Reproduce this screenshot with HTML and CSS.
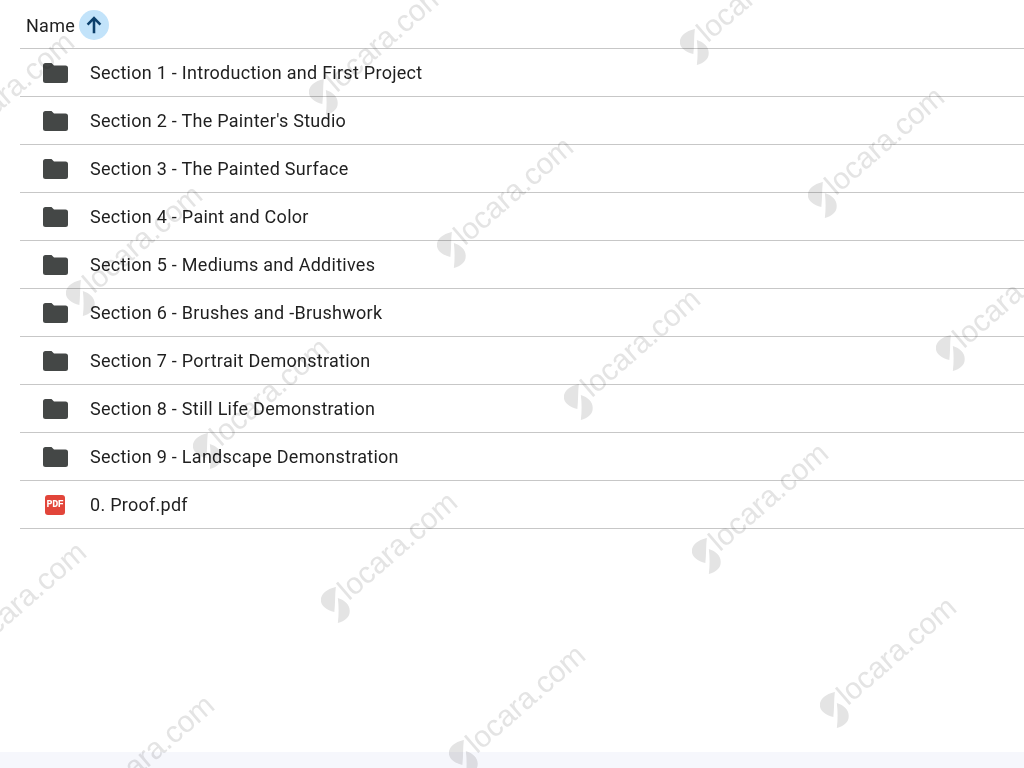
FILE: index.html
```html
<!DOCTYPE html>
<html lang="en">
<head>
  <meta charset="UTF-8" />
  <title>Drive folder</title>
  <link rel="stylesheet" href="styles.css">
</head>
<body>
  <svg class="sprites" width="0" height="0">
    <symbol id="folder" viewBox="0 0 25 20"><path d="M2.500 0h6l2.500 2.500h11.500A2.500 2.500 0 0 1 25 5v12.500a2.500 2.500 0 0 1-2.500 2.500h-20A2.500 2.500 0 0 1 0 17.500v-15A2.500 2.500 0 0 1 2.500 0z"/></symbol>
    <symbol id="logo" viewBox="0 0 29 36"><path d="M15 0C6 2 0 7 0 13c0 6 6 10 13.500 12C14.500 17 14 8 15 0zM17 11c7 2 12 7 12 13 0 6-5 10-12 12 1-8 1-17 0-25z"/></symbol>
  </svg>

  <div class="file-list">
    <div class="list-head">
      <span>Name</span>
      <span class="sort-btn">
        <svg viewBox="0 0 24 24" width="22" height="22"><path d="M12 21V5M5 11.500L12 4.500l7 7" fill="none" stroke="#0b3f6b" stroke-width="2.800"/></svg>
      </span>
    </div>
    <div class="row"><svg class="folder"><use href="#folder"/></svg><span>Section 1 - Introduction and First Project</span></div>
    <div class="row"><svg class="folder"><use href="#folder"/></svg><span>Section 2 - The Painter's Studio</span></div>
    <div class="row"><svg class="folder"><use href="#folder"/></svg><span>Section 3 - The Painted Surface</span></div>
    <div class="row"><svg class="folder"><use href="#folder"/></svg><span>Section 4 - Paint and Color</span></div>
    <div class="row"><svg class="folder"><use href="#folder"/></svg><span>Section 5 - Mediums and Additives</span></div>
    <div class="row"><svg class="folder"><use href="#folder"/></svg><span>Section 6 - Brushes and -Brushwork</span></div>
    <div class="row"><svg class="folder"><use href="#folder"/></svg><span>Section 7 - Portrait Demonstration</span></div>
    <div class="row"><svg class="folder"><use href="#folder"/></svg><span>Section 8 - Still Life Demonstration</span></div>
    <div class="row"><svg class="folder"><use href="#folder"/></svg><span>Section 9 - Landscape Demonstration</span></div>
    <div class="row"><span class="pdf-icon">PDF</span><span>0. Proof.pdf</span></div>
  </div>
  <div class="bottom-band"></div>

  <div class="wm wm1"><svg class="wm-logo"><use href="#logo"/></svg><span class="wm-text">locara.com</span></div>
  <div class="wm wm2"><svg class="wm-logo"><use href="#logo"/></svg><span class="wm-text">locara.com</span></div>
  <div class="wm wm3"><svg class="wm-logo"><use href="#logo"/></svg><span class="wm-text">locara.com</span></div>
  <div class="wm wm4"><svg class="wm-logo"><use href="#logo"/></svg><span class="wm-text">locara.com</span></div>
  <div class="wm wm5"><svg class="wm-logo"><use href="#logo"/></svg><span class="wm-text">locara.com</span></div>
  <div class="wm wm6"><svg class="wm-logo"><use href="#logo"/></svg><span class="wm-text">locara.com</span></div>
  <div class="wm wm7"><svg class="wm-logo"><use href="#logo"/></svg><span class="wm-text">locara.com</span></div>
  <div class="wm wm8"><svg class="wm-logo"><use href="#logo"/></svg><span class="wm-text">locara.com</span></div>
  <div class="wm wm9"><svg class="wm-logo"><use href="#logo"/></svg><span class="wm-text">locara.com</span></div>
  <div class="wm wm10"><svg class="wm-logo"><use href="#logo"/></svg><span class="wm-text">locara.com</span></div>
  <div class="wm wm11"><svg class="wm-logo"><use href="#logo"/></svg><span class="wm-text">locara.com</span></div>
  <div class="wm wm12"><svg class="wm-logo"><use href="#logo"/></svg><span class="wm-text">locara.com</span></div>
  <div class="wm wm13"><svg class="wm-logo"><use href="#logo"/></svg><span class="wm-text">locara.com</span></div>
  <div class="wm wm14"><svg class="wm-logo"><use href="#logo"/></svg><span class="wm-text">locara.com</span></div>
  <div class="wm wm15"><svg class="wm-logo"><use href="#logo"/></svg><span class="wm-text">locara.com</span></div>
  <div class="wm wm16"><svg class="wm-logo"><use href="#logo"/></svg><span class="wm-text">locara.com</span></div>
</body>
</html>
```

FILE: styles.css
```css
html, body {
  margin: 0;
  height: 768px;
  overflow: hidden;
}
body {
  position: relative;
  display: flex;
  flex-direction: column;
  background-color: #fff;
  font-family: Roboto, "Noto Sans", sans-serif;
  font-size: 18px;
  letter-spacing: 0.27px;
  color: #1f1f1f;
}
.sprites {
  position: absolute;
}
.file-list {
  flex: 1;
  padding-left: 20px;
}
.list-head {
  display: flex;
  align-items: center;
  gap: 4px;
  height: 49px;
  padding: 2px 0 0 6px;
  border-bottom: 1px solid #c7c7c7;
  box-sizing: border-box;
}
.sort-btn {
  display: flex;
  align-items: center;
  justify-content: center;
  width: 30px;
  height: 30px;
  border-radius: 50%;
  background-color: #c2e3fa;
}
.row {
  display: flex;
  align-items: center;
  height: 47px;
  border-bottom: 1px solid #c7c7c7;
}
.folder {
  width: 25px;
  height: 20px;
  margin: 0 22px 0 23px;
  fill: #444746;
}
.pdf-icon {
  display: flex;
  align-items: center;
  justify-content: center;
  width: 20px;
  height: 20px;
  margin: 0 25px 0 25px;
  border-radius: 3px;
  background-color: #e2453a;
  color: #fff;
  font-family: "Liberation Mono", monospace;
  font-size: 10px;
  font-weight: bold;
  letter-spacing: -0.3px;
}
.bottom-band {
  height: 16px;
  background-color: #f6f7fc;
}

/* watermark, repeated over the page */
.wm {
  position: absolute;
  display: flex;
  align-items: center;
  width: 200px;
  transform-origin: 14px 18px;
  transform: rotate(-41deg);
  mix-blend-mode: multiply;
  color: #e4e4e4;
  font-family: "Liberation Sans", sans-serif;
  font-size: 30px;
  letter-spacing: 0;
}
.wm-logo {
  flex: none;
  width: 29px;
  height: 36px;
  fill: #e4e4e4;
  transform: rotate(41deg);
}
.wm-text {
  margin: 0 0 8px -2px;
}
.wm1 { left: 678px; top: 27px; }
.wm2 { left: 307px; top: 77px; }
.wm3 { left: 806px; top: 180px; }
.wm4 { left: 435px; top: 230px; }
.wm5 { left: 64px; top: 278px; }
.wm6 { left: 934px; top: 333px; }
.wm7 { left: 562px; top: 382px; }
.wm8 { left: 191px; top: 431px; }
.wm9 { left: 690px; top: 536px; }
.wm10 { left: 319px; top: 585px; }
.wm11 { left: -52px; top: 635px; }
.wm12 { left: 818px; top: 690px; }
.wm13 { left: 447px; top: 738px; }
.wm14 { left: 76px; top: 788px; }
.wm15 { left: -64px; top: 125px; }
.wm16 { left: 1062px; top: 230px; }
```
